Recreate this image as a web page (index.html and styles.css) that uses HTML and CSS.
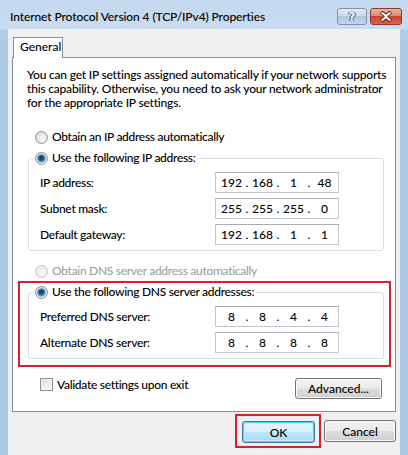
FILE: index.html
```html
<!DOCTYPE html>
<html>
<head>
<meta charset="utf-8">
<link rel="stylesheet" href="styles.css">
</head>
<body>
<div class="window">
  <div class="titlebar">
    <span class="title">Internet Protocol Version 4 (TCP/IPv4) Properties</span>
    <div class="caption-btns">
      <span class="cbtn help">?</span>
      <span class="cbtn close">
        <svg width="14" height="11" viewBox="0 0 14 11"><path d="M2 1 L7 4.5 L12 1 M2 10 L7 6.5 L12 10" stroke="#5a1a10" stroke-width="3.6" fill="none"/><path d="M2.5 1.5 L7 4.8 L11.5 1.5 M2.5 9.5 L7 6.2 L11.5 9.5" stroke="#fff" stroke-width="2" fill="none"/><rect x="5.6" y="4.2" width="2.8" height="2.6" fill="#fff"/></svg>
      </span>
    </div>
  </div>
  <div class="client">
    <div class="tabs"><span class="tab">General</span></div>
    <div class="panel">
      <p class="intro">You can get IP settings assigned automatically if your network supports<br>this capability. Otherwise, you need to ask your network administrator<br>for the appropriate IP settings.</p>

      <div class="radio-row r-auto-ip"><span class="radio"></span>Obtain an IP address automatically</div>

      <fieldset class="group">
        <legend><span class="radio-row"><span class="radio checked"></span>Use the following IP address:</span></legend>
        <div class="field-row"><span class="flabel">IP address:</span><span class="ipbox"><span class="oct">192</span><span class="dot">.</span><span class="oct">168</span><span class="dot">.</span><span class="oct">1</span><span class="dot">.</span><span class="oct">48</span></span></div>
        <div class="field-row"><span class="flabel">Subnet mask:</span><span class="ipbox"><span class="oct">255</span><span class="dot">.</span><span class="oct">255</span><span class="dot">.</span><span class="oct">255</span><span class="dot">.</span><span class="oct">0</span></span></div>
        <div class="field-row"><span class="flabel">Default gateway:</span><span class="ipbox"><span class="oct">192</span><span class="dot">.</span><span class="oct">168</span><span class="dot">.</span><span class="oct">1</span><span class="dot">.</span><span class="oct">1</span></span></div>
      </fieldset>

      <div class="radio-row disabled r-auto-dns"><span class="radio"></span>Obtain DNS server address automatically</div>

      <div class="mark dns-mark">
        <fieldset class="group">
          <legend><span class="radio-row"><span class="radio checked"></span>Use the following DNS server addresses:</span></legend>
          <div class="field-row"><span class="flabel">Preferred DNS server:</span><span class="ipbox"><span class="oct">8</span><span class="dot">.</span><span class="oct">8</span><span class="dot">.</span><span class="oct">4</span><span class="dot">.</span><span class="oct">4</span></span></div>
          <div class="field-row"><span class="flabel">Alternate DNS server:</span><span class="ipbox"><span class="oct">8</span><span class="dot">.</span><span class="oct">8</span><span class="dot">.</span><span class="oct">8</span><span class="dot">.</span><span class="oct">8</span></span></div>
        </fieldset>
      </div>

      <div class="bottom-row">
        <div class="check-row"><span class="checkbox"></span>Validate settings upon exit</div>
        <span class="btn adv">Advanced...</span>
      </div>
    </div>
    <div class="buttons">
      <div class="mark ok-mark"><span class="btn default">OK</span></div>
      <span class="btn cancel">Cancel</span>
    </div>
  </div>
</div>
</body>
</html>
```

FILE: styles.css
```css
* { box-sizing: border-box; }
html, body { margin: 0; padding: 0; }
body {
  width: 408px;
  height: 455px;
  overflow: hidden;
  font-family: "Segoe UI", Lato, "Noto Sans", sans-serif;
  font-size: 12px;
  font-weight: 500;
  letter-spacing: -0.3px;
  color: #000;
}
.window {
  width: 408px;
  height: 455px;
  padding: 0 8px;
  background: linear-gradient(180deg, #c3d8ee 0px, #cadcef 29px, #aecbe8 30px, #a9c8e6 455px);
  display: flex;
  flex-direction: column;
}
.titlebar {
  height: 29px;
  flex: none;
  display: flex;
  align-items: flex-start;
  justify-content: space-between;
  padding-left: 2px;
}
.title {
  font-size: 12px;
  letter-spacing: -0.1px;
  line-height: 16px;
  margin-top: 9px;
  color: #000;
  white-space: nowrap;
}
.caption-btns {
  display: flex;
  align-items: flex-start;
  gap: 3px;
  margin-right: -2px;
  margin-top: 8px;
}
.cbtn {
  height: 17px;
  border-radius: 3px;
  display: flex;
  align-items: center;
  justify-content: center;
}
.help {
  width: 30px;
  border: 1px solid #7f93ad;
  background: linear-gradient(180deg, #e1ebf5 0%, #cbdbeb 45%, #b3c8de 50%, #c2d5e8 100%);
  color: #fff;
  font-weight: bold;
  font-size: 12px;
  letter-spacing: 0;
  font-family: "DejaVu Sans", sans-serif;
  text-shadow: 0 0 1px #2d4766, 0 0 1px #2d4766, 1px 0 0 #42607f, -1px 0 0 #42607f;
}
.close {
  width: 32px;
  border: 1px solid #8e3a2c;
  background: linear-gradient(180deg, #eab2a5 0%, #de8a76 45%, #c8452d 50%, #d6654a 100%);
}
.client {
  flex: 1;
  background: #f0f0f0;
  padding: 8px 4px 0 4px;
  display: flex;
  flex-direction: column;
}
.tabs {
  display: flex;
  padding-left: 1px;
  position: relative;
  z-index: 1;
  margin-bottom: -1px;
}
.tab {
  width: 50px;
  height: 21px;
  border: 1px solid #898c95;
  border-bottom: none;
  background: #fff;
  padding-left: 6px;
  line-height: 18px;
  letter-spacing: 0;
}
.panel {
  border: 1px solid #898c95;
  background: #fff;
  padding: 0 13px 12px 0;
  display: flex;
  flex-direction: column;
}
.intro {
  margin: 10px 0 0 14px;
  line-height: 14px;
  letter-spacing: -0.2px;
  white-space: nowrap;
}
.radio-row {
  display: flex;
  align-items: center;
  height: 16px;
  line-height: 16px;
  white-space: nowrap;
  gap: 4px;
}
.r-auto-ip { margin: 19px 0 0 22px; }
.r-auto-dns { margin: 12px 0 0 22px; }
.disabled { color: #a0a0a0; }
.radio {
  width: 13px;
  height: 13px;
  border-radius: 50%;
  border: 1px solid #8c8f93;
  background: radial-gradient(circle at 60% 65%, #fdfdfd 0%, #e8e8e8 45%, #cfd1d3 100%);
  flex: none;
  display: inline-flex;
  align-items: center;
  justify-content: center;
}
.radio.checked::after {
  content: "";
  width: 7px;
  height: 7px;
  border-radius: 50%;
  background: radial-gradient(circle at 45% 40%, #0f3a57 0%, #1f5a80 40%, #3d9fd0 75%, #8fd3f0 100%);
  box-shadow: 0 0 0 0.5px #2a6f98;
}
.disabled .radio {
  border-color: #c5c7c9;
  background: radial-gradient(circle at 60% 65%, #fafafa 0%, #eeeeee 55%, #e0e0e0 100%);
}
.group {
  margin: 5px 0 0 15px;
  width: 356px;
  border: 1px solid #d5dfe5;
  border-radius: 3px;
  padding: 6px 0 5px 11px;
  display: flex;
  flex-direction: column;
  gap: 5px;
}
.group legend {
  padding: 0 2px;
  margin-left: -7px;
}
.field-row {
  display: flex;
  align-items: center;
  height: 21px;
}
.flabel {
  width: 175px;
}
.ipbox {
  width: 124px;
  height: 21px;
  border: 1px solid #c3c7cd;
  border-top-color: #abadb3;
  background: #fff;
  display: flex;
  align-items: center;
  padding-left: 4px;
  letter-spacing: 0;
}
.oct {
  width: 23px;
  text-align: center;
}
.dot {
  width: 8px;
  text-align: center;
}
.mark {
  border: 2px solid #dc1f2d;
}
.dns-mark {
  margin: 2px 0 0 5px;
  width: 373px;
  padding: 1px 0 6px 8px;
}
.dns-mark .group {
  margin: 0;
  width: 356px;
}
.bottom-row {
  display: flex;
  justify-content: space-between;
  align-items: flex-start;
  margin-top: 11px;
}
.check-row {
  display: flex;
  align-items: center;
  gap: 4px;
  margin: -2px 0 0 27px;
  height: 16px;
  white-space: nowrap;
}
.checkbox {
  width: 13px;
  height: 13px;
  border: 1px solid #8f8f8f;
  background: linear-gradient(135deg, #d8d8d8 0%, #ececec 50%, #f7f7f7 100%);
  box-shadow: inset 0 0 0 1px #f4f4f4;
  flex: none;
}
.btn {
  display: flex;
  align-items: center;
  justify-content: center;
  height: 21px;
  border: 1px solid #707070;
  border-radius: 3px;
  background: linear-gradient(180deg, #f2f2f2 0%, #ebebeb 48%, #dddddd 52%, #cfcfcf 100%);
  box-shadow: inset 0 0 0 1px #fcfcfc;
  color: #000;
  letter-spacing: 0;
  white-space: nowrap;
}
.adv { width: 87px; }
.buttons {
  display: flex;
  justify-content: flex-end;
  align-items: center;
  gap: 3px;
  margin-top: 2px;
}
.ok-mark {
  padding: 5px 4px 3px 5px;
}
.btn.default {
  width: 73px;
  height: 22px;
  border-color: #3c7fb1;
  box-shadow: inset 0 0 0 1px #48d3fb, inset 0 0 0 2px #c8ecfb;
  background: linear-gradient(180deg, #eaf6fd 0%, #d9f0fc 48%, #bee6fd 52%, #a7d9f5 100%);
}
.cancel {
  width: 72px;
  height: 22px;
}
```
